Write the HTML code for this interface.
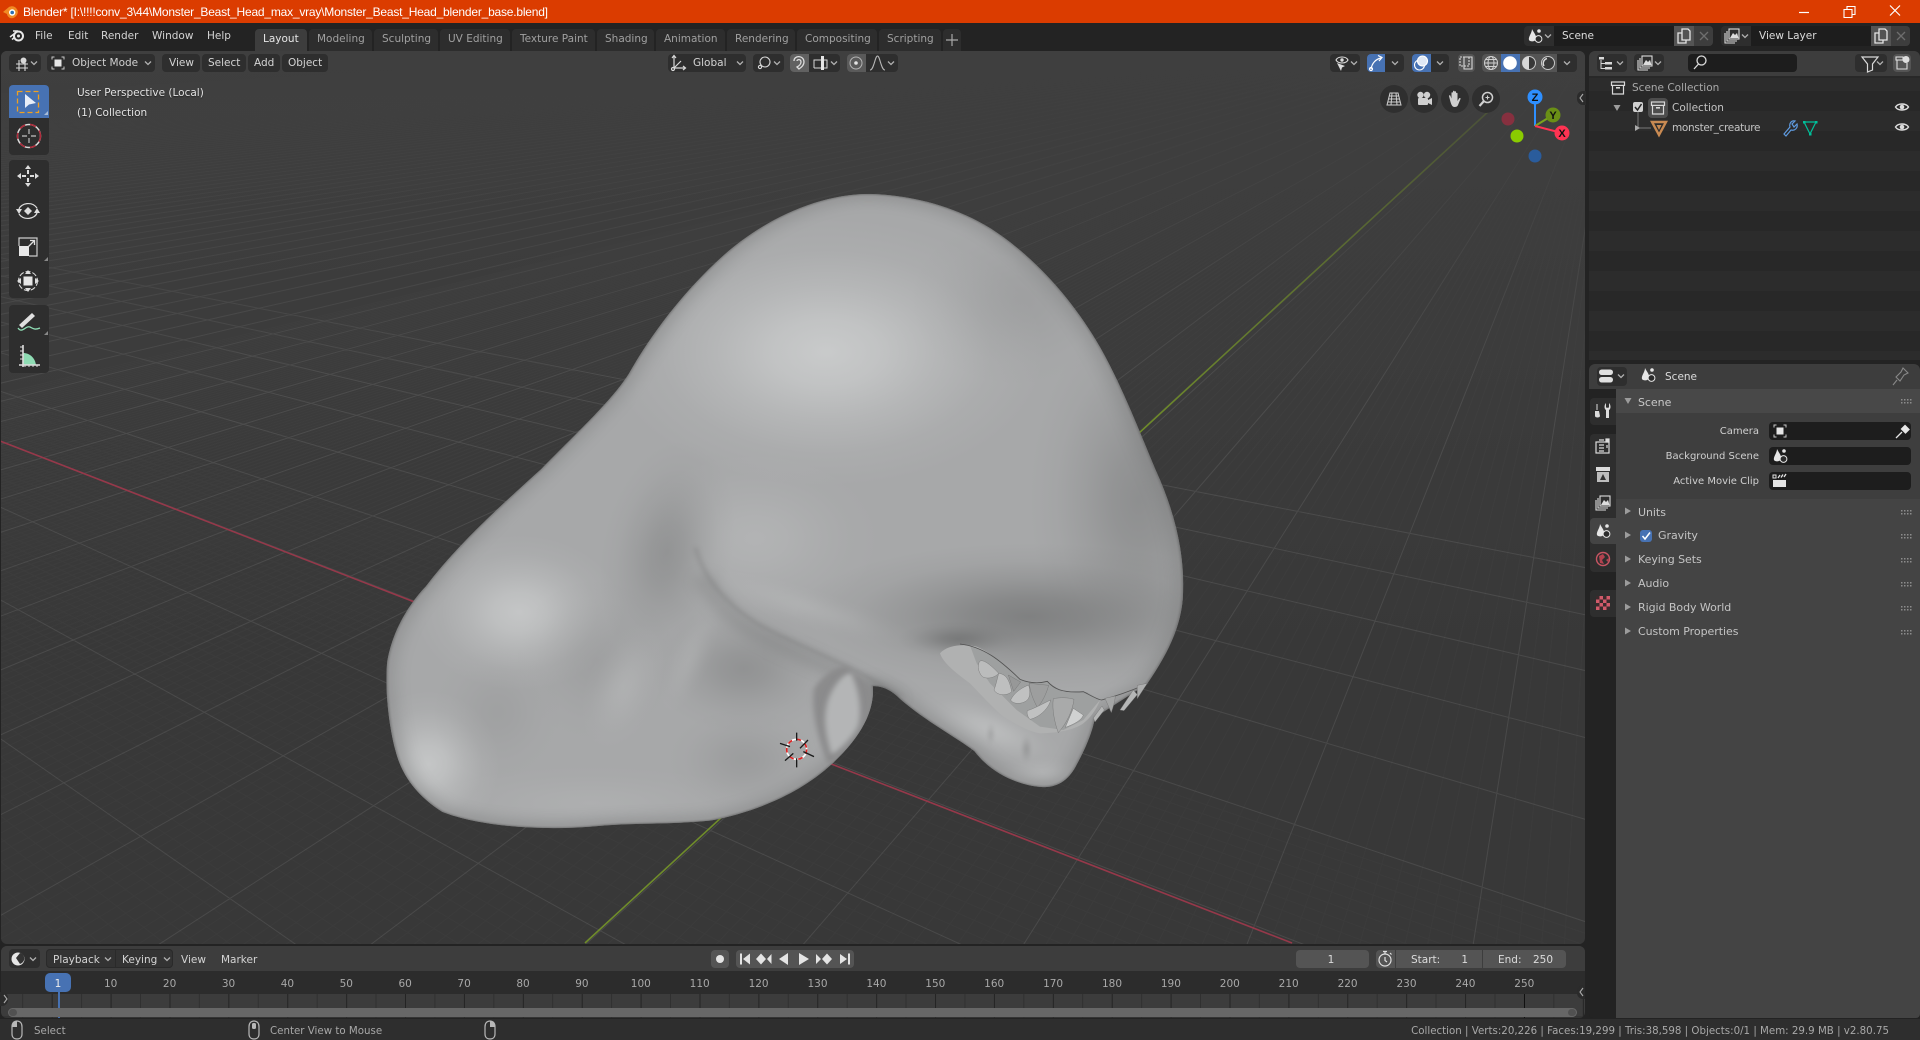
<!DOCTYPE html>
<html><head><meta charset="utf-8"><title>Blender</title>
<style>
html,body{margin:0;padding:0;width:1920px;height:1040px;overflow:hidden;background:#232323}
body{position:relative;font-family:"DejaVu Sans","Liberation Sans",sans-serif;font-size:10.5px;color:#d4d4d4}
.a{position:absolute}
.t{position:absolute;white-space:nowrap;line-height:16px;height:16px}
.c{transform:translateX(-50%)}
.r{transform:translateX(-100%)}
.s{font-size:10.25px}
.p{font-size:11px;letter-spacing:-.05px}
.b{position:absolute;border-radius:4px;background:#2e2e2e}
.g{background:#545454}
.tab{position:absolute;top:29px;height:22px;background:#2d2d2d;border-radius:4px 4px 0 0;color:#a0a0a0;line-height:21px;padding-top:0;text-indent:8px;white-space:nowrap}
.f{position:absolute;background:#1d1d1d;border-radius:4px;height:18px;left:1769px;width:142px}
svg{position:absolute;left:0;top:0;overflow:hidden}
</style></head><body>

<!-- title bar -->
<div class="a" style="left:0;top:0;width:1920px;height:23px;background:#db3c00"></div>
<div class="t" style="left:23px;top:4px;color:#fff;font-family:'Liberation Sans',sans-serif;font-size:12px;letter-spacing:-.21px">Blender* [I:\!!!!conv_3\44\Monster_Beast_Head_max_vray\Monster_Beast_Head_blender_base.blend]</div>

<!-- top bar -->
<div class="a" style="left:0;top:23px;width:1920px;height:28px;background:#232323"></div>
<div class="t" style="left:35px;top:28px">File</div>
<div class="t" style="left:68px;top:28px">Edit</div>
<div class="t" style="left:101px;top:28px">Render</div>
<div class="t" style="left:152px;top:28px">Window</div>
<div class="t" style="left:207px;top:28px">Help</div>
<div class="tab" style="left:255px;width:52px;background:#3d3d3d;color:#e6e6e6">Layout</div>
<div class="tab" style="left:309px;width:63px">Modeling</div>
<div class="tab" style="left:374px;width:64px">Sculpting</div>
<div class="tab" style="left:440px;width:70px">UV Editing</div>
<div class="tab" style="left:512px;width:83px">Texture Paint</div>
<div class="tab" style="left:597px;width:57px">Shading</div>
<div class="tab" style="left:656px;width:69px">Animation</div>
<div class="tab" style="left:727px;width:68px">Rendering</div>
<div class="tab" style="left:797px;width:80px">Compositing</div>
<div class="tab" style="left:879px;width:62px">Scripting</div>
<div class="tab" style="left:943px;width:18px"></div>

<div class="b" style="left:1524px;top:26px;width:189px;height:20px"></div>
<div class="a" style="left:1554px;top:26px;width:120px;height:20px;background:#1d1d1d"></div>
<div class="a" style="left:1674px;top:26px;width:20px;height:20px;background:#545454"></div>
<div class="a" style="left:1694px;top:26px;width:19px;height:20px;background:#3d3d3d;border-radius:0 4px 4px 0"></div>
<div class="t" style="left:1562px;top:28px;color:#dcdcdc">Scene</div>
<div class="b" style="left:1721px;top:26px;width:189px;height:20px"></div>
<div class="a" style="left:1751px;top:26px;width:120px;height:20px;background:#1d1d1d"></div>
<div class="a" style="left:1871px;top:26px;width:20px;height:20px;background:#545454"></div>
<div class="a" style="left:1891px;top:26px;width:19px;height:20px;background:#3d3d3d;border-radius:0 4px 4px 0"></div>
<div class="t" style="left:1759px;top:28px;color:#dcdcdc">View Layer</div>

<!-- viewport -->
<div class="a" id="vp" style="left:1px;top:51px;width:1584px;height:893px;border-radius:6px;overflow:hidden;background:linear-gradient(#3f3f3f,#3c3c3c 30%,#383838 70%)">
<svg width="1920" height="1040" viewBox="0 0 1920 1040" style="left:-1px;top:-51px">
<defs>
<linearGradient id="fade" x1="0" y1="51" x2="0" y2="400" gradientUnits="userSpaceOnUse"><stop offset="0" stop-color="#3f3f3f"/><stop offset=".2" stop-color="#3e3e3e" stop-opacity=".92"/><stop offset=".45" stop-color="#3d3d3d" stop-opacity=".6"/><stop offset="1" stop-color="#3b3b3b" stop-opacity="0"/></linearGradient>
<linearGradient id="gy" x1="1139" y1="435" x2="1490" y2="110" gradientUnits="userSpaceOnUse"><stop offset="0" stop-color="#6f8c2a"/><stop offset="1" stop-color="#4b5238"/></linearGradient>
<radialGradient id="L"><stop offset="0" stop-color="#dfe1e1"/><stop offset=".25" stop-color="#dfe1e1" stop-opacity=".78"/><stop offset=".5" stop-color="#dfe1e1" stop-opacity=".42"/><stop offset=".75" stop-color="#dfe1e1" stop-opacity=".13"/><stop offset="1" stop-color="#dfe1e1" stop-opacity="0"/></radialGradient>
<radialGradient id="D"><stop offset="0" stop-color="#5f6060"/><stop offset=".25" stop-color="#5f6060" stop-opacity=".78"/><stop offset=".5" stop-color="#5f6060" stop-opacity=".42"/><stop offset=".75" stop-color="#5f6060" stop-opacity=".13"/><stop offset="1" stop-color="#5f6060" stop-opacity="0"/></radialGradient>
<clipPath id="mc"><path id="mp" d="M930 55C1000 58 1080 80 1150 135C1230 200 1300 300 1350 410C1390 500 1420 600 1450 690C1490 800 1505 900 1500 990C1495 1060 1470 1120 1435 1185L1340 1262C1335 1300 1320 1340 1305 1375C1290 1410 1270 1423 1245 1423C1200 1420 1150 1390 1120 1340C1090 1310 1030 1270 985 1220C965 1195 950 1190 935 1190C938 1240 920 1300 860 1370C800 1440 720 1480 640 1500C560 1510 500 1505 440 1512C340 1525 220 1515 150 1480C100 1440 75 1390 65 1340C50 1270 45 1180 50 1130C60 1060 90 1000 120 960C180 860 260 770 330 690C400 600 460 530 490 470C530 380 590 280 660 200C730 120 830 55 930 55Z"/></clipPath>
<filter id="b14" filterUnits="userSpaceOnUse" x="-100" y="-100" width="1760" height="1760"><feGaussianBlur stdDeviation="14"/></filter>
<filter id="b5" filterUnits="userSpaceOnUse" x="-100" y="-100" width="1760" height="1760"><feGaussianBlur stdDeviation="5"/></filter>
<filter id="b2" filterUnits="userSpaceOnUse" x="-100" y="-100" width="1760" height="1760"><feGaussianBlur stdDeviation="2"/></filter>
</defs>
<g id="grid" fill="none"></g>
<rect x="0" y="51" width="1600" height="350" fill="url(#fade)"/>
<path d="M0 441L1292 943" stroke="#96384a" stroke-width="1.6" fill="none"/>
<path d="M585 943L1490 110" stroke="url(#gy)" stroke-width="1.6" fill="none"/>

<!-- creature -->
<g transform="translate(360 170) scale(.5485 .4337)">
<g clip-path="url(#mc)">
<rect x="0" y="0" width="1568" height="1568" fill="#a7a8a9"/>
<!-- head lighting -->
<ellipse cx="850" cy="420" rx="400" ry="310" fill="url(#L)" opacity=".6"/>
<ellipse cx="720" cy="850" rx="230" ry="200" fill="url(#L)" opacity=".2"/>
<ellipse cx="1420" cy="760" rx="200" ry="430" fill="url(#D)" opacity=".35"/>
<ellipse cx="1220" cy="1030" rx="430" ry="170" fill="url(#D)" opacity=".55"/>
<ellipse cx="1200" cy="300" rx="200" ry="200" fill="url(#D)" opacity=".12"/>
<ellipse cx="820" cy="1010" rx="220" ry="45" fill="url(#L)" opacity=".14" transform="rotate(22 820 1010)"/>
<!-- neck lighting -->
<ellipse cx="290" cy="1020" rx="190" ry="180" fill="url(#L)" opacity=".52"/>
<ellipse cx="125" cy="1370" rx="130" ry="170" fill="url(#L)" opacity=".52"/>
<ellipse cx="560" cy="880" rx="120" ry="260" fill="url(#D)" opacity=".3" transform="rotate(8 560 880)"/>
<ellipse cx="700" cy="1150" rx="170" ry="150" fill="url(#D)" opacity=".3"/>
<ellipse cx="430" cy="1130" rx="150" ry="190" fill="url(#D)" opacity=".12"/>
<ellipse cx="480" cy="1190" rx="70" ry="150" fill="url(#L)" opacity=".2" transform="rotate(15 480 1190)"/>
<ellipse cx="600" cy="1130" rx="40" ry="130" fill="url(#L)" opacity=".15" transform="rotate(18 600 1130)"/>
<ellipse cx="250" cy="1250" rx="120" ry="160" fill="url(#D)" opacity=".1"/>
<ellipse cx="420" cy="1460" rx="320" ry="90" fill="url(#L)" opacity=".12"/>
<ellipse cx="700" cy="1360" rx="140" ry="120" fill="url(#D)" opacity=".16"/>
<!-- edge falloff -->
<use href="#mp" fill="none" stroke="#6e6f6f" stroke-width="30" opacity=".35" filter="url(#b14)"/>
<use href="#mp" fill="none" stroke="#555" stroke-width="4" opacity=".55" filter="url(#b2)"/>
<!-- crease -->
<path d="M630 920C650 970 680 1020 730 1055C810 1110 890 1140 985 1215" fill="none" stroke="#6e6f6f" stroke-width="34" opacity=".3" filter="url(#b14)" transform="translate(-6 14)"/>
<path d="M612 870C625 940 670 1005 730 1050C810 1105 890 1135 985 1215" fill="none" stroke="#6a6a6a" stroke-width="3.500" opacity=".6" filter="url(#b5)"/>
<!-- ear -->
<path d="M828 1195C840 1170 870 1140 888 1145C905 1170 936 1180 936 1220C930 1280 890 1340 855 1372C840 1330 820 1250 828 1195Z" fill="#8b8b8c" filter="url(#b5)"/>
<path d="M850 1240C855 1200 880 1160 895 1160C915 1210 915 1270 905 1290C890 1320 870 1340 860 1348C850 1310 845 1270 850 1240Z" fill="#b4b5b6" filter="url(#b5)"/>
<!-- jaw lights -->
<ellipse cx="1150" cy="1290" rx="150" ry="60" fill="url(#L)" opacity=".35" transform="rotate(30 1150 1290)"/>
<ellipse cx="1245" cy="1390" rx="80" ry="40" fill="url(#L)" opacity=".2"/>
<ellipse cx="1215" cy="1335" rx="14" ry="36" fill="url(#D)" opacity=".25"/>
<ellipse cx="1150" cy="1300" rx="12" ry="30" fill="url(#D)" opacity=".18"/>
<ellipse cx="1090" cy="1082" rx="110" ry="42" fill="url(#D)" opacity=".5"/>
</g>
</g>

<!-- mouth (3x crop coordinates) -->
<g transform="translate(920 620) scale(.3333)">
<path d="M60 100C80 76 130 70 170 80C200 92 240 120 290 172C320 186 350 188 380 184C400 200 410 212 430 216C470 218 500 214 540 240C530 268 510 295 490 310C460 330 420 338 360 340C330 335 300 320 250 290C210 255 170 210 150 190C110 160 70 130 60 100Z" fill="#b0b1b1"/>
<path d="M150 76C200 90 240 120 290 172C320 186 350 190 380 184L430 216L500 216L540 240L490 300L430 330L360 320L290 270L210 190L170 130Z" fill="#8a8b8b" opacity=".45"/>
<path d="M120 72C190 80 240 120 300 178C330 190 360 190 382 184C400 205 425 220 490 215C510 225 530 238 545 240C590 228 640 210 685 190" fill="none" stroke="#525252" stroke-width="2.500"/>
<g stroke="#707070" stroke-width="1.200" stroke-linejoin="round">
<path d="M178 125C190 112 225 148 236 160C222 176 195 178 185 168C175 155 172 140 178 125Z" fill="#bbbcbc"/>
<path d="M236 160C255 162 268 175 275 215C262 228 232 228 222 210C228 195 232 175 236 160Z" fill="#bebfbf"/>
<path d="M265 165L302 186L281 214Z" fill="#979898"/>
<path d="M326 195C332 215 330 232 322 240C310 252 280 255 272 240C280 222 300 205 326 195Z" fill="#c0c1c1"/>
<path d="M328 190L386 196C380 220 365 250 352 262C340 240 330 215 328 190Z" fill="#9d9e9e"/>
<path d="M392 240C388 262 360 292 330 298C322 290 320 280 322 272C345 265 370 250 392 240Z" fill="#c0c1c1"/>
<path d="M400 236C420 232 445 232 462 238C458 272 440 310 415 338C405 312 395 268 400 236Z" fill="#a9aaaa"/>
<path d="M460 265L490 285C485 300 465 312 436 322Z" fill="#d0d1d1"/>
<path d="M520 294L546 258L553 270L525 306Z" fill="#b5b6b6"/>
<path d="M555 235L586 228C585 245 578 265 574 278Z" fill="#a4a5a5"/>
<path d="M600 270L640 210L652 224L612 272Z" fill="#b5b6b6"/>
<path d="M652 196L682 190L652 236Z" fill="#adaeae"/>
</g>
</g>

<!-- 3D cursor -->
<g transform="translate(740 680) scale(.3333)" fill="none">
<circle cx="170" cy="208" r="30" stroke="#fff" stroke-width="5"/>
<circle cx="170" cy="208" r="30" stroke="#e02020" stroke-width="5" stroke-dasharray="14 14"/>
<path d="M170 158V182M170 235V262M120 190L150 200M204 180L180 205M135 242L160 220M222 230L190 215" stroke="#1a1a1a" stroke-width="4"/>
</g>
</svg>
</div>

<!-- viewport header -->
<div class="b" style="left:9px;top:54px;width:32px;height:18px"></div>
<div class="b" style="left:47px;top:54px;width:108px;height:18px"></div>
<div class="t" style="left:72px;top:55px;color:#d0d0d0">Object Mode</div>
<div class="b" style="left:162px;top:54px;width:38px;height:18px"></div><div class="t" style="left:169px;top:55px">View</div>
<div class="b" style="left:202px;top:54px;width:44px;height:18px"></div><div class="t" style="left:208px;top:55px">Select</div>
<div class="b" style="left:248px;top:54px;width:32px;height:18px"></div><div class="t" style="left:254px;top:55px">Add</div>
<div class="b" style="left:282px;top:54px;width:46px;height:18px"></div><div class="t" style="left:288px;top:55px">Object</div>
<div class="b" style="left:668px;top:54px;width:78px;height:18px"></div><div class="t" style="left:693px;top:55px">Global</div>
<div class="b" style="left:753px;top:54px;width:31px;height:18px"></div>
<div class="b" style="left:790px;top:54px;width:50px;height:18px"></div><div class="b g" style="left:790px;top:54px;width:19px;height:18px;background:#616161;border-radius:4px 0 0 4px"></div>
<div class="b" style="left:847px;top:54px;width:51px;height:18px"></div><div class="b g" style="left:847px;top:54px;width:19px;height:18px;background:#5a5a5a;border-radius:4px 0 0 4px"></div>
<div class="b" style="left:1330px;top:54px;width:30px;height:18px"></div>
<div class="b" style="left:1367px;top:54px;width:37px;height:18px"></div><div class="b" style="left:1367px;top:54px;width:18px;height:18px;background:#4772b3;border-radius:4px 0 0 4px"></div>
<div class="b" style="left:1412px;top:54px;width:37px;height:18px"></div><div class="b" style="left:1412px;top:54px;width:19px;height:18px;background:#4772b3;border-radius:4px 0 0 4px"></div>
<div class="b g" style="left:1458px;top:54px;width:17px;height:18px"></div>
<div class="b" style="left:1482px;top:54px;width:95px;height:18px"></div>
<div class="b g" style="left:1482px;top:54px;width:75px;height:18px;border-radius:4px 0 0 4px"></div>
<div class="a" style="left:1501px;top:54px;width:19px;height:18px;background:#4772b3"></div>

<div class="t" style="left:77px;top:85px;color:#e4e4e4;text-shadow:0 1px 1px #222">User Perspective (Local)</div>
<div class="t" style="left:77px;top:105px;color:#e4e4e4;text-shadow:0 1px 1px #222">(1) Collection</div>

<!-- tools -->
<div class="b" style="left:9px;top:85px;width:40px;height:70px"></div>
<div class="a" style="left:9px;top:85px;width:40px;height:33px;background:#4772b3;border-radius:4px 4px 0 0"></div>
<div class="b" style="left:9px;top:160px;width:40px;height:138px"></div>
<div class="b" style="left:9px;top:305px;width:40px;height:68px"></div>

<!-- nav circles -->
<div class="a" style="left:1380px;top:85px;width:28px;height:28px;border-radius:14px;background:#2f2f2f"></div>
<div class="a" style="left:1410px;top:85px;width:28px;height:28px;border-radius:14px;background:#2f2f2f"></div>
<div class="a" style="left:1441px;top:85px;width:28px;height:28px;border-radius:14px;background:#2f2f2f"></div>
<div class="a" style="left:1472px;top:85px;width:28px;height:28px;border-radius:14px;background:#2f2f2f"></div>
<div class="a" style="left:1577px;top:91px;width:9px;height:14px;background:#2b2b2b;border-radius:6px 0 0 6px"></div>

<!-- outliner -->
<div class="a" style="left:1589px;top:51px;width:331px;height:309px;border-radius:6px 6px 0 0;overflow:hidden;background:repeating-linear-gradient(#282828 0 20px,#2c2c2c 20px 40px)">
<div class="a" style="left:0;top:0;width:331px;height:25px;background:#3d3d3d"></div>
<div class="a" style="left:0;top:25px;width:331px;height:2px;background:#282828"></div>
</div>
<div class="b" style="left:1597px;top:54px;width:30px;height:18px"></div>
<div class="b" style="left:1634px;top:54px;width:30px;height:18px"></div>
<div class="b" style="left:1688px;top:54px;width:109px;height:18px;background:#1d1d1d"></div>
<div class="b" style="left:1855px;top:54px;width:32px;height:18px"></div>
<div class="b g" style="left:1893px;top:54px;width:18px;height:18px"></div>
<div class="t" style="left:1632px;top:80px;color:#a8a8a8">Scene Collection</div>
<div class="a" style="left:1648px;top:98px;width:20px;height:20px;background:#4d4d4d;border-radius:4px"></div>
<div class="t" style="left:1672px;top:100px;color:#c4c4c4">Collection</div>
<div class="t" style="left:1672px;top:120px;color:#c4c4c4;letter-spacing:-.3px">monster_creature</div>

<!-- properties -->
<div class="a" style="left:1589px;top:364px;width:331px;height:654px;background:#232323;border-radius:6px 6px 4px 4px;overflow:hidden">
<div class="a" style="left:0;top:0;width:331px;height:25px;background:#3d3d3d"></div>
<div class="a" style="left:27px;top:25px;width:304px;height:629px;background:#444"></div>
<div class="a" style="left:27px;top:25px;width:304px;height:24px;background:#484848"></div>
<div class="a" style="left:27px;top:49px;width:304px;height:86px;background:#3e3e3e"></div>
</div>
<div class="b" style="left:1597px;top:367px;width:30px;height:19px"></div>
<div class="t" style="left:1665px;top:369px;color:#dcdcdc">Scene</div>
<div class="b" style="left:1590px;top:398px;width:26px;height:27px;border-radius:4px 0 0 4px"></div>
<div class="b" style="left:1590px;top:434px;width:26px;height:138px;border-radius:4px 0 0 4px"></div>
<div class="a" style="left:1590px;top:518px;width:26px;height:26px;background:#444;border-radius:4px 0 0 4px"></div>
<div class="b" style="left:1590px;top:590px;width:26px;height:27px;border-radius:4px 0 0 4px"></div>

<div class="t p" style="left:1638px;top:395px;color:#c8c8c8">Scene</div>
<div class="t r" style="left:1759px;top:424px;color:#d0d0d0;font-size:10px">Camera</div>
<div class="t r" style="left:1759px;top:449px;color:#d0d0d0;font-size:10px">Background Scene</div>
<div class="t r" style="left:1759px;top:474px;color:#d0d0d0;font-size:10px">Active Movie Clip</div>
<div class="f" style="top:422px"></div><div class="f" style="top:447px"></div><div class="f" style="top:472px"></div>
<div class="t p" style="left:1638px;top:505px;color:#c4c4c4">Units</div>
<div class="a" style="left:1640px;top:530px;width:12px;height:12px;border-radius:3px;background:#4772b3"></div>
<div class="t p" style="left:1658px;top:528px;color:#c4c4c4">Gravity</div>
<div class="t p" style="left:1638px;top:552px;color:#c4c4c4">Keying Sets</div>
<div class="t p" style="left:1638px;top:576px;color:#c4c4c4">Audio</div>
<div class="t p" style="left:1638px;top:600px;color:#c4c4c4">Rigid Body World</div>
<div class="t p" style="left:1638px;top:624px;color:#c4c4c4">Custom Properties</div>

<!-- timeline -->
<div class="a" style="left:1px;top:946px;width:1584px;height:72px;border-radius:6px;overflow:hidden;background:#3c3c3c">
<div class="a" style="left:0;top:0;width:1584px;height:25px;background:#3d3d3d"></div>
<div class="a" style="left:0;top:25px;width:1584px;height:23px;background:#2c2c2c"></div>
<div class="a" style="left:0;top:48px;width:1584px;height:24px;background-image:linear-gradient(to right,#242424 1.2px,transparent 1.2px),linear-gradient(to right,#303030 1.2px,transparent 1.2px);background-size:58.9px 100%,58.9px 100%;background-position:50.7px 0,21.2px 0"></div>
<div class="a" style="left:0;top:70px;width:1584px;height:2px;background:#303030;opacity:.6"></div>
<div class="a" style="left:57px;top:46px;width:1.5px;height:26px;background:#4772b3"></div>
<div class="a" style="left:1523px;top:48px;width:1px;height:24px;background:#111"></div>
<div class="a" style="left:7px;top:62px;width:1569px;height:9px;border-radius:5px;background:#676767"></div>
<div class="a" style="left:8px;top:63px;width:8px;height:7px;border-radius:4px;background:#515151"></div>
<div class="a" style="left:1567px;top:63px;width:8px;height:7px;border-radius:4px;background:#515151"></div>
</div>
<div class="b" style="left:9px;top:949px;width:31px;height:19px"></div>
<div class="b" style="left:46px;top:949px;width:127px;height:19px;background:#333;box-shadow:inset 0 0 0 1px #2a2a2a"></div>
<div class="a" style="left:115px;top:949px;width:1px;height:19px;background:#2a2a2a"></div>
<div class="t" style="left:53px;top:952px">Playback</div>
<div class="t" style="left:122px;top:952px">Keying</div>
<div class="t" style="left:181px;top:952px">View</div>
<div class="t" style="left:221px;top:952px">Marker</div>
<div class="b g" style="left:711px;top:950px;width:18px;height:18px"></div>
<div class="b g" style="left:736px;top:950px;width:118px;height:18px"></div>
<div class="b g" style="left:1296px;top:950px;width:73px;height:18px"></div>
<div class="t c" style="left:1331px;top:952px;color:#dcdcdc">1</div>
<div class="b g" style="left:1376px;top:950px;width:190px;height:18px"></div>
<div class="a" style="left:1395px;top:950px;width:1px;height:18px;background:#3d3d3d"></div>
<div class="a" style="left:1482px;top:950px;width:1px;height:18px;background:#3d3d3d"></div>
<div class="t" style="left:1411px;top:952px;color:#dcdcdc">Start:</div>
<div class="t r" style="left:1468px;top:952px;color:#dcdcdc">1</div>
<div class="t" style="left:1498px;top:952px;color:#dcdcdc">End:</div>
<div class="t r" style="left:1553px;top:952px;color:#dcdcdc">250</div>
<div id="frames" style="color:#a8a8a8">
<div class="a" style="left:45px;top:973px;width:26px;height:19px;background:#4772b3;border-radius:5px"></div>
<div class="t c" style="left:58px;top:976px;color:#eee">1</div>
<div class="t c" style="left:110.7px;top:976px">10</div><div class="t c" style="left:169.6px;top:976px">20</div><div class="t c" style="left:228.5px;top:976px">30</div><div class="t c" style="left:287.4px;top:976px">40</div><div class="t c" style="left:346.3px;top:976px">50</div><div class="t c" style="left:405.2px;top:976px">60</div><div class="t c" style="left:464.1px;top:976px">70</div><div class="t c" style="left:523px;top:976px">80</div><div class="t c" style="left:581.9px;top:976px">90</div><div class="t c" style="left:640.8px;top:976px">100</div><div class="t c" style="left:699.7px;top:976px">110</div><div class="t c" style="left:758.6px;top:976px">120</div><div class="t c" style="left:817.5px;top:976px">130</div><div class="t c" style="left:876.4px;top:976px">140</div><div class="t c" style="left:935.3px;top:976px">150</div><div class="t c" style="left:994.2px;top:976px">160</div><div class="t c" style="left:1053.1px;top:976px">170</div><div class="t c" style="left:1112px;top:976px">180</div><div class="t c" style="left:1170.9px;top:976px">190</div><div class="t c" style="left:1229.8px;top:976px">200</div><div class="t c" style="left:1288.7px;top:976px">210</div><div class="t c" style="left:1347.6px;top:976px">220</div><div class="t c" style="left:1406.5px;top:976px">230</div><div class="t c" style="left:1465.4px;top:976px">240</div><div class="t c" style="left:1524.3px;top:976px">250</div>
</div>
<div class="a" style="left:0;top:992px;width:8px;height:14px;background:#2b2b2b;border-radius:0 6px 6px 0"></div>
<div class="a" style="left:1577px;top:985px;width:8px;height:14px;background:#2b2b2b;border-radius:6px 0 0 6px"></div>

<!-- status bar -->
<div class="a" style="left:0;top:1019px;width:1920px;height:21px;background:#2e2e2e"></div>
<div class="t s" style="left:34px;top:1023px;color:#a8a8a8">Select</div>
<div class="t s" style="left:270px;top:1023px;color:#a8a8a8">Center View to Mouse</div>
<div class="t r s" style="left:1889px;top:1023px;color:#a8a8a8">Collection | Verts:20,226 | Faces:19,299 | Tris:38,598 | Objects:0/1 | Mem: 29.9 MB | v2.80.75</div>

<!-- icon overlay -->
<svg width="1920" height="1040" viewBox="0 0 1920 1040" style="pointer-events:none">
<defs>
<path id="ch" d="M-3-1.5L0 1.5L3-1.5" fill="none" stroke="#b0b0b0" stroke-width="1.3"/>
<g id="scn"><path d="M-6 4C-7 1-3-3-3-7C-1-3 2 0 1 3C0 6-5 6-6 4Z" fill="#e6e6e6"/><circle cx="3.5" cy="3" r="3.4" fill="#2b2b2b" stroke="#e6e6e6" stroke-width="1"/><circle cx="4" cy="-5" r="1.8" fill="#e6e6e6"/></g>
<g id="obj"><rect x="-3.5" y="-3.5" width="7" height="7" fill="#e6e6e6"/><path d="M-6-3.5V-6H-3.5M3.5-6H6V-3.5M6 3.5V6H3.5M-3.5 6H-6V3.5" fill="none" stroke="#c8c8c8" stroke-width="1"/></g>
<g id="box" fill="none" stroke="#d8d8d8" stroke-width="1.2"><rect x="-6.5" y="-6" width="13" height="3.4"/><path d="M-5.5-2.6V6H5.5V-2.6"/><path d="M-2-.2H2" stroke-width="1.6"/></g>
<g id="eye"><path d="M-6.5 0C-4-4 4-4 6.5 0C4 4-4 4-6.5 0Z" fill="none" stroke="#dcdcdc" stroke-width="1.4"/><circle r="2.3" fill="#dcdcdc"/></g>
<g id="cpy" fill="none" stroke="#e4e4e4" stroke-width="1.3"><path d="M-2-7H4L6-5V4H-2Z"/><path d="M-2-3H-6V7H2V4"/></g>
<path id="x" d="M-4-4L4 4M4-4L-4 4" stroke="#6e6e6e" stroke-width="1.3" fill="none"/>
<g id="vl" fill="none" stroke="#dcdcdc" stroke-width="1.1"><rect x="-3" y="-7" width="10" height="10"/><path d="M-5-5V5H5M-7-3V7H3"/><path d="M-2 2L1-3L3-1L5-3L6.500 2Z" fill="#dcdcdc" stroke="none"/></g>
<path id="tr" d="M-3-3.500L3 0L-3 3.500Z" fill="#9c9c9c"/>
<path id="trd" d="M-3.500-3L3.500-3L0 3Z" fill="#9c9c9c"/>
<g id="grip" fill="#8c8c8c"><rect x="0" y="0" width="1.5" height="1.5"/><rect x="3" y="0" width="1.5" height="1.5"/><rect x="6" y="0" width="1.5" height="1.5"/><rect x="9" y="0" width="1.5" height="1.5"/><rect x="0" y="3" width="1.5" height="1.5"/><rect x="3" y="3" width="1.5" height="1.5"/><rect x="6" y="3" width="1.5" height="1.5"/><rect x="9" y="3" width="1.5" height="1.5"/></g>
<path id="mouse" d="M-5-3C-5-8-2-9 0-9C2-9 5-8 5-3V4C5 8 2 9 0 9C-2 9-5 8-5 4Z" fill="none" stroke="#b8b8b8" stroke-width="1.2"/>
</defs>

<!-- title logo -->
<g transform="translate(11 12)"><path d="M-8 0L-2-5C2-7 6-5 7 0C6 5 2 7-1 6C-3 5-4 3-4 2Z" fill="#f08a24"/><circle cx="1.200" cy=".500" r="3.200" fill="#fff"/><circle cx="1.200" cy=".500" r="1.800" fill="#2a6fb3"/></g>
<!-- window controls -->
<path d="M1799 12.500H1809" stroke="#fff" stroke-width="1.2"/>
<path d="M1844 9.500H1852V17.500H1844ZM1847 9.500V6.500H1855V14.500H1852" fill="none" stroke="#fff" stroke-width="1.1"/>
<path d="M1890 5.500L1900 15.500M1900 5.500L1890 15.500" stroke="#fff" stroke-width="1.2"/>
<!-- blender logo -->
<g transform="translate(17 36)" fill="none" stroke="#e8e8e8"><circle cx="1.500" r="4.500" stroke-width="2"/><circle cx="1.500" r="1.500" fill="#e8e8e8" stroke="none"/><path d="M-7 1L-1-3.500M-5 3.500L-2 1M-4-5H1" stroke-width="1.600"/></g>
<path d="M952 34V46M946 40H958" stroke="#a8a8a8" stroke-width="1.2"/>
<!-- topbar icons -->
<use href="#scn" transform="translate(1535 36)"/><use href="#ch" transform="translate(1548 36)"/>
<use href="#cpy" transform="translate(1684 36)"/><use href="#x" transform="translate(1704 36)"/>
<use href="#vl" transform="translate(1732 36)"/><use href="#ch" transform="translate(1745 36)"/>
<use href="#cpy" transform="translate(1881 36)"/><use href="#x" transform="translate(1901 36)"/>
<!-- 3d view dropdown -->
<g transform="translate(22 63)" fill="none" stroke="#d8d8d8" stroke-width="1.1"><path d="M-6 1H6M-6 5H6M-3-3V8M3 0V8"/><circle cx="1.500" cy="-2.500" r="3" fill="#d8d8d8" stroke="none"/></g><use href="#ch" transform="translate(34 63)"/>
<use href="#obj" transform="translate(58 63)"/><use href="#ch" transform="translate(148 63)"/>
<g transform="translate(678 63)" fill="none" stroke="#d8d8d8" stroke-width="1.2"><path d="M-4-7V5H7M-4 5L3-2"/><path d="M-6-5L-4-7.500L-2-5M5 3L7.500 5L5 7"/><circle cx="-5" cy="6" r="1.500"/></g><use href="#ch" transform="translate(740 63)"/>
<g transform="translate(764 63)" fill="none" stroke="#d8d8d8" stroke-width="1.1"><circle cx="1" cy="-1" r="5"/><circle cx="-4" cy="4" r="1.600"/></g><use href="#ch" transform="translate(777 63)"/>
<g transform="translate(799 63)" fill="none" stroke="#ddd" stroke-width="1.3"><path d="M-5-2C-5-8 5-8 5-1C5 2 3 4 0 6L-2 4C0 3 2 1 2-1C2-4-2-4-2-2"/></g>
<g transform="translate(820 63)" fill="none" stroke="#d8d8d8" stroke-width="1"><path d="M-6 5V-3H7V5H-6"/><rect x="1" y="-7" width="3" height="14" fill="#e6e6e6" stroke="none"/></g><use href="#ch" transform="translate(834 63)"/>
<g transform="translate(856 63)"><circle r="6" fill="none" stroke="#b4b4b4"/><circle r="1.800" fill="#e4e4e4"/></g>
<path d="M870 70C874 70 875 56 877.500 56C880 56 881 70 885 70" fill="none" stroke="#b8b8b8" stroke-width="1.100"/><use href="#ch" transform="translate(891 63)"/>
<!-- right header -->
<g transform="translate(1342 63)"><path d="M-6-3C-4-7 4-7 6-3C4 1-4 1-6-3Z" fill="none" stroke="#ddd" stroke-width="1.100"/><circle cy="-3" r="1.700" fill="#ddd"/><path d="M-5 0L3 3L0 4.500L-1 8Z" fill="#ddd"/></g><use href="#ch" transform="translate(1354 63)"/>
<g transform="translate(1376 63)" fill="none" stroke="#fff" stroke-width="1.200"><path d="M-5 6C-4 0 0-4 5-5"/><path d="M2-7.500L6-5.500L3-2" /><circle cx="-5" cy="6" r="1.500"/></g><use href="#ch" transform="translate(1395 63)"/>
<g transform="translate(1421 63)" fill="none" stroke="#fff" stroke-width="1.100"><circle cx="-1.500" cy="2" r="5"/><circle cx="1.500" cy="-2" r="5" fill="#dfe8f5"/></g><use href="#ch" transform="translate(1440 63)"/>
<g transform="translate(1466 63)" fill="none" stroke="#d8d8d8" stroke-width="1.100"><rect x="-6" y="-6" width="9" height="9" stroke-dasharray="2 1"/><path d="M-2-6H6V6H-2Z"/></g>
<g transform="translate(1491 63)" fill="none" stroke="#d0d0d0"><circle r="6.500"/><ellipse rx="3" ry="6.500"/><path d="M-6.500 0H6.500M-5.500-3.500H5.500M-5.500 3.500H5.500"/></g>
<circle cx="1510" cy="63" r="6.800" fill="#fff"/>
<g transform="translate(1529 63)"><circle r="6.500" fill="#383838" stroke="#c8c8c8"/><path d="M0-6.500A6.500 6.500 0 0 0 0 6.500Z" fill="#d8d8d8"/></g>
<g transform="translate(1548 63)"><circle r="6.500" fill="#3a3a3a" stroke="#c8c8c8"/><path d="M-4 3A5 5 0 0 1-1-4.500" fill="none" stroke="#d8d8d8" stroke-width="1.500"/></g><use href="#ch" transform="translate(1567 63)"/>
<!-- nav icons -->
<g transform="translate(1394 99)" fill="none" stroke="#cfcfcf"><path d="M-4-6H4L7 6H-7ZM-5.500 0H5.500M-6.500 3H6.500M-5-3H5M-2-6L-3 6M2-6L3 6"/></g>
<g transform="translate(1424 99)" fill="#d0d0d0"><circle cx="-3.500" cy="-4" r="3.200"/><circle cx="3" cy="-4" r="3.200"/><rect x="-6" y="-1" width="10" height="7" rx="1"/><path d="M4 1L8-1V6L4 4Z"/></g>
<path transform="translate(1455 99)" d="M-5 1L-6-3C-6-4-4.500-4-4.500-3L-3.500-.5V-6C-3.500-7-2-7-2-6V-1V-7.500C-2-8.500-.5-8.500-.5-7.500V-1V-7C-.5-8 1-8 1-7V-1V-5.500C1-6.500 2.500-6.500 2.500-5.500V2L4-.5C4.500-1.500 6-1 5.500 0L3 6C2.500 7.500 1 8 -.5 8C-3 8-4 5-5 1Z" fill="#d0d0d0"/>
<g transform="translate(1486 99)" fill="none" stroke="#d0d0d0" stroke-width="1.500"><circle cx="1.500" cy="-1.500" r="5"/><path d="M-2 2L-6.500 7" stroke-width="2.200"/><path d="M-.5-1.500H3.500M1.500-3.500V.5" stroke-width="1.100"/></g>
<path d="M1583 94L1580 98L1583 102" fill="none" stroke="#aaa" stroke-width="1.100"/>
<!-- gizmo -->
<path d="M1535 126V100" stroke="#2e8fff" stroke-width="2"/><path d="M1535 126L1553 115" stroke="#7aa31c" stroke-width="2"/><path d="M1535 126L1562 133" stroke="#ff3352" stroke-width="2"/>
<circle cx="1508" cy="119" r="6.500" fill="#86303f"/><circle cx="1517" cy="136" r="6.500" fill="#8acb00"/><circle cx="1535" cy="156" r="6.500" fill="#2a5c9c"/>
<circle cx="1535" cy="97" r="7.500" fill="#2e8fff"/><circle cx="1553" cy="115" r="7.500" fill="#6a8f16"/><circle cx="1562" cy="133" r="7.500" fill="#ff3352"/>
<text x="1535" y="101" font-size="11" font-weight="bold" font-family="Liberation Sans" text-anchor="middle" fill="#101010">Z</text>
<text x="1553" y="119" font-size="11" font-weight="bold" font-family="Liberation Sans" text-anchor="middle" fill="#101010">Y</text>
<text x="1562" y="137" font-size="11" font-weight="bold" font-family="Liberation Sans" text-anchor="middle" fill="#101010">X</text>
<!-- tools -->
<rect x="17.500" y="91.500" width="21" height="21" fill="none" stroke="#f0a020" stroke-width="1.300" stroke-dasharray="5 3"/>
<path d="M25 94V108L29 104.500L36 103Z" fill="#e8eef8"/><path d="M44 115L48 111V115Z" fill="#a8bcd8"/>
<g transform="translate(29 136)" fill="none"><circle r="11.500" stroke="#ddd" stroke-width="1.500"/><circle r="11.500" stroke="#b02a3a" stroke-width="1.500" stroke-dasharray="6 5"/><path d="M-7 0H-2M2 0H7M0-7V-2M0 2V7" stroke="#aaa" stroke-width="1.400"/></g>
<g transform="translate(28 176)" fill="#ddd"><path d="M0-11L3-7H-3ZM0 11L3 7H-3ZM-11 0L-7-3V3ZM11 0L7-3V3Z"/><path d="M-1-6H1V-2H-1ZM-1 2H1V6H-1ZM-6-1H-2V1H-6ZM2-1H6V1H2Z"/></g>
<g transform="translate(28 211)"><path d="M0-4L4 0L0 4L-4 0Z" fill="#ddd"/><path d="M-9-2C-7-8 4-10 9-3M9 2C7 8-4 10-9 3" fill="none" stroke="#ddd" stroke-width="1.200"/><path d="M-12-2H-6L-9 3ZM6 2H12L9-3Z" fill="#ddd"/></g>
<g transform="translate(28 247)"><rect x="-9" y="-1" width="10" height="10" fill="#e8e8e8"/><path d="M-9-1V-9H9V9H1" fill="none" stroke="#ccc" stroke-width="1.200"/><path d="M0 0L6-6M2-6.500H6.500V-2" fill="none" stroke="#e0e0e0" stroke-width="1.300"/></g>
<path d="M44 261L48 257V261Z" fill="#888"/>
<g transform="translate(28 281)"><circle r="9.500" fill="none" stroke="#ddd" stroke-width="1.100" stroke-dasharray="5 2"/><rect x="-4.500" y="-4.500" width="9" height="9" fill="#e6e6e6"/><path d="M0-11L3-7H-3ZM0 11L3 7H-3ZM-11 0L-7-3V3ZM11 0L7-3V3Z" fill="#ddd"/></g>
<g transform="translate(28 322)"><path d="M-10 6C-6 12-2 3 2 5C6 7 7 8 12 6" fill="none" stroke="#8fdcb4" stroke-width="1.300"/><path d="M-9 3L4-9L7-6L-6 6Z" fill="#e0e0e0"/></g>
<path d="M44 335L48 331V335Z" fill="#888"/>
<g transform="translate(28 356)"><path d="M-5-3C2-3 7 2 8 9H-5Z" fill="#8fdcb4"/><path d="M-5-11V11M-9 9H12" stroke="#ddd" stroke-width="1.600" fill="none"/><path d="M-8-9H-5M-8-5H-5M-8-1H-5M-8 3H-5M-3 11V9M1 11V9M5 11V9M9 11V9" stroke="#ddd" stroke-width="1"/></g>
<!-- outliner icons -->
<g transform="translate(1606 63)" fill="#d8d8d8"><rect x="-7" y="-6" width="5" height="2.500"/><rect x="-1" y="-1" width="7" height="2.500"/><rect x="-1" y="4" width="7" height="2.500"/><path d="M-5-3V5.500H-1M-5 .5H-1" fill="none" stroke="#d8d8d8"/></g><use href="#ch" transform="translate(1620 63)"/>
<use href="#vl" transform="translate(1645 63)"/><use href="#ch" transform="translate(1658 63)"/>
<g transform="translate(1700 62)" fill="none" stroke="#dcdcdc" stroke-width="1.300"><circle cx="1.500" cy="-1.500" r="4.500"/><path d="M-1.500 2L-6 7"/></g>
<path d="M1862 57H1878L1872.500 64V70L1867.500 72V64Z" fill="none" stroke="#d8d8d8" stroke-width="1.200"/><use href="#ch" transform="translate(1880 63)"/>
<g transform="translate(1902 63)" fill="none" stroke="#ddd" stroke-width="1.100"><rect x="-6" y="-6" width="7" height="3"/><path d="M-5-3V6H5V0"/><circle cx="4" cy="-3.500" r="3.500" fill="#ddd" stroke="none"/></g>
<use href="#box" transform="translate(1618 88)"/>
<use href="#trd" transform="translate(1617 108)"/>
<rect x="1633" y="102" width="10" height="10" rx="2" fill="#d0d0d0"/><path d="M1635 107L1637.500 110L1641.500 104" fill="none" stroke="#222" stroke-width="1.500"/>
<use href="#box" transform="translate(1658 108)"/>
<path d="M1638 112V128H1651" fill="none" stroke="#777"/>
<path d="M1635 125L1640 128L1635 131Z" fill="#aaa"/>
<path d="M1652 122H1666L1659 135Z" fill="none" stroke="#c98a52" stroke-width="2.400"/><path d="M1656.500 125H1661.500L1659 130Z" fill="#c98a52"/>
<path d="M1784 134L1790 127C1789 124 1791 120 1795 121L1792 124L1794 127L1797 124C1798 128 1795 131 1791 130L1786 136Z" fill="none" stroke="#5f9be0" stroke-width="1.200"/>
<path d="M1804 122H1816L1810 134Z" fill="none" stroke="#00c09a" stroke-width="1.200"/><rect x="1803" y="121" width="2.500" height="2.500" fill="#00c09a"/><rect x="1815" y="121" width="2.500" height="2.500" fill="#00c09a"/><rect x="1809" y="133" width="2.500" height="2.500" fill="#00c09a"/>
<use href="#eye" transform="translate(1902 107)"/><use href="#eye" transform="translate(1902 127)"/>
<!-- properties icons -->
<g transform="translate(1606 376)" fill="#e0e0e0"><rect x="-7" y="-6.500" width="14" height="5.500" rx="2.700"/><rect x="-7" y="1" width="14" height="5.500" rx="2.700"/></g><use href="#ch" transform="translate(1621 376)"/>
<use href="#scn" transform="translate(1648 375)"/>
<path d="M1903 368L1908 373L1904 375L1900 381L1896 377L1901 372ZM1897 380L1893 385" fill="none" stroke="#888" stroke-width="1.100"/>
<use href="#trd" transform="translate(1628 401)"/>
<use href="#tr" transform="translate(1628 511)"/><use href="#tr" transform="translate(1628 535)"/><use href="#tr" transform="translate(1628 559)"/><use href="#tr" transform="translate(1628 583)"/><use href="#tr" transform="translate(1628 607)"/><use href="#tr" transform="translate(1628 631)"/>
<use href="#grip" transform="translate(1901 399)"/><use href="#grip" transform="translate(1901 510)"/><use href="#grip" transform="translate(1901 534)"/><use href="#grip" transform="translate(1901 558)"/><use href="#grip" transform="translate(1901 582)"/><use href="#grip" transform="translate(1901 606)"/><use href="#grip" transform="translate(1901 630)"/>
<path d="M1642.500 536L1645 539L1650 532.500" fill="none" stroke="#fff" stroke-width="1.500"/>
<use href="#obj" transform="translate(1780 431)"/>
<path d="M1896 438L1902 432M1905 425.500L1909 429.500L1905.500 433L1901.500 429Z" fill="#e6e6e6" stroke="#e6e6e6" stroke-width="1.300"/>
<use href="#scn" transform="translate(1780 456)"/>
<g transform="translate(1780 481)" fill="#e4e4e4"><rect x="-7" y="-1" width="13" height="7"/><path d="M-7-6V-3H-4V-6Z" fill="none" stroke="#e4e4e4"/><path d="M-2-3L0-6M1-3.500L3-6.500M4-4L6-7" stroke="#e4e4e4" stroke-width="1.300"/></g>
<!-- property tabs -->
<g transform="translate(1603 411)" fill="#dcdcdc"><path d="M-6-7V-1" stroke="#dcdcdc"/><path d="M-8 0H-4L-3 5C-3 7-8 7-8 5Z"/><path d="M3-8V-4C3-3 6-3 6-4V-8C8-6 8-2 6-1V7H3V-1C1-2 1-6 3-8Z"/></g>
<g transform="translate(1603 447)" fill="none" stroke="#dcdcdc" stroke-width="1.200"><rect x="-7" y="-5" width="13" height="11"/><path d="M-4-7H1M-4-2H1M-4 1H1M-4 4H1M4-2V1" /><rect x="3" y="-8" width="3" height="3" fill="#dcdcdc"/></g>
<g transform="translate(1603 475)" fill="#dcdcdc"><rect x="-7" y="-8" width="14" height="4"/><path d="M-6-3H6V7H-6Z" fill="#bdbdbd"/><path d="M0-1L3 5H-3Z" fill="#333"/></g>
<use href="#vl" transform="translate(1603 503)"/>
<use href="#scn" transform="translate(1603 531)"/>
<g transform="translate(1603 559)"><circle r="6.500" fill="#2e2e2e" stroke="#c85563" stroke-width="1.400"/><path d="M-4-3L0-5L2-2L-1 1L1 5L-3 4ZM3 1L6-1L5 3Z" fill="#b3424f"/></g>
<g transform="translate(1603 603)"><rect x="-7" y="-7" width="14" height="14" fill="#d25a6a"/><path d="M-7-7H-3.500V-3.500H-7ZM0-7H3.500V-3.500H0ZM-3.500-3.500H0V0H-3.500ZM3.500-3.500H7V0H3.500ZM-7 0H-3.500V3.500H-7ZM0 0H3.500V3.500H0ZM-3.500 3.500H0V7H-3.500ZM3.500 3.500H7V7H3.500Z" fill="#3a2a2c"/></g>
<!-- timeline icons -->
<g transform="translate(18 959)"><circle r="6.500" fill="#e6e6e6"/><path d="M2-6L-2-1L2 5C5 4 7 1 6-2C6-4 4-6 2-6Z" fill="#333"/></g><use href="#ch" transform="translate(33 959)"/>
<use href="#ch" transform="translate(108 959)"/><use href="#ch" transform="translate(167 959)"/>
<circle cx="720" cy="959" r="4" fill="#e4e4e4"/>
<g fill="#e4e4e4">
<path d="M741 953.500H743V964.500H741ZM751 953.500V964.500L744 959Z" transform="translate(-1 0)"/>
<path d="M762 953.500L767 959L762 964.500L757 959ZM768 959L772.500 954V964Z" transform="translate(-1 0)"/>
<path d="M788 953V965L779 959Z"/>
<path d="M799 953V965L809 959Z"/>
<path d="M816 954L821 959L816 964ZM827 953.500L832 959L827 964.500L822 959Z"/>
<path d="M841 954V964L848 959ZM849 953.500H851V964.500H849Z" transform="translate(-1 0)"/>
</g>
<g transform="translate(1385 959)" fill="none" stroke="#e0e0e0" stroke-width="1.200"><circle cy="1" r="6"/><path d="M0-2V1.500L2 3M-2-7.500H2M0-7.500V-5M5-6L6.500-4.500"/></g>
<path d="M4 995L7 999L4 1003" fill="none" stroke="#aaa" stroke-width="1.100"/>
<path d="M1583 988L1580 992L1583 996" fill="none" stroke="#aaa" stroke-width="1.100"/>
<!-- status icons -->
<use href="#mouse" transform="translate(17 1030)"/><path d="M12 1027C12 1023 14 1021.500 17 1021V1027Z" fill="#b8b8b8"/>
<use href="#mouse" transform="translate(254 1030)"/><rect x="252" y="1023" width="4" height="6" rx="1.500" fill="#b8b8b8"/>
<use href="#mouse" transform="translate(490 1030)"/><path d="M495 1027C495 1023 493 1021.500 490 1021V1027Z" fill="#b8b8b8"/>
</svg>

<script>
(function(){
var H=44,maj='',min='';
function la(d){var y0=H+d;if(y0>=950)return '';var s=(y0-70)/960,x=Math.min(1600,(950-y0)/s),y=y0+s*x;return 'M0 '+y0.toFixed(1)+'L'+x.toFixed(1)+' '+y.toFixed(1);}
function lb(d){var y0=H+d,ye=Math.min(y0,950),x=1621*(1-ye/y0),xs=1621*(1-51/y0);return 'M'+xs.toFixed(1)+' 51L'+x.toFixed(1)+' '+ye.toFixed(1);}
var k,m,q,d;
for(k=-60;k<=69;k++){q=.00252-.000036*k;if(q<=1e-5)continue;d=1/q;
 if(k%10==0){maj+=la(d);}else if(d>350){min+=la(d);}}
for(m=-46;m<=1300;m++){q=.000697+.000015*m;if(q<=1e-6)continue;d=1/q;
 if(m%10==0){if(d>50)maj+=lb(d);}else if(d>350&&m<400){min+=lb(d);}}
var g=document.getElementById('grid');
var mk=function(s,a){var p=document.createElementNS('http://www.w3.org/2000/svg','path');p.setAttribute('d',s);p.setAttribute('stroke','#fff');p.setAttribute('stroke-opacity',a);p.setAttribute('stroke-width','1');g.appendChild(p);};
mk(min,'.018');mk(maj,'.09');
})();
</script>
</body></html>
